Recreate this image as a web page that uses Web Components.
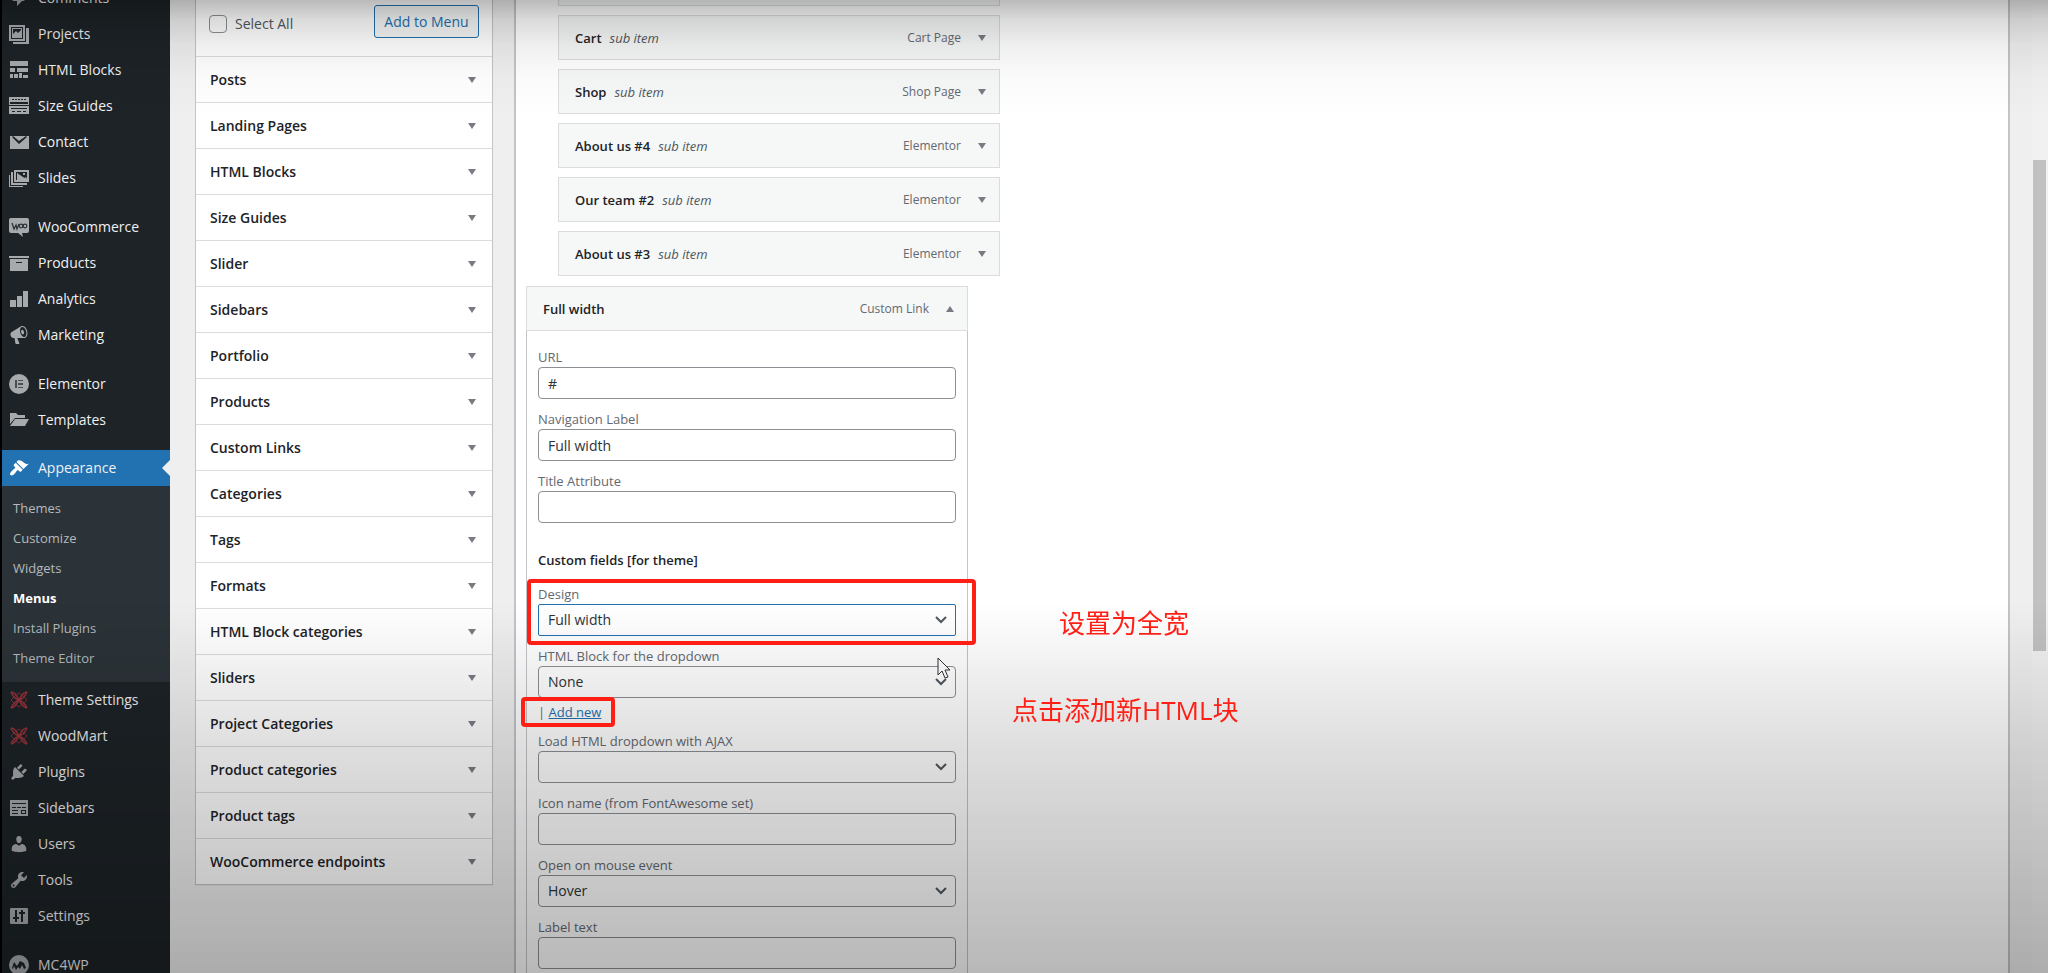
<!DOCTYPE html>
<html lang="en">
<head>
<meta charset="utf-8">
<title>Menus</title>
<style>
	body {
		margin: 0;
		height: 100vh;
		overflow: hidden;
		font-family: "Open Sans", "Noto Sans", "Noto Sans CJK SC", sans-serif;
		font-size: 14px;
		line-height: 20px;
		color: #1d2327;
		background: #efefef;
	}
</style>
</head>
<body>
<menus-screen></menus-screen>

<script>
const ICONS = {
	comments: '<path d="M5 2h9a2 2 0 0 1 2 2v7a2 2 0 0 1-2 2h-1l-5 5v-5H5a2 2 0 0 1-2-2V4a2 2 0 0 1 2-2z"/>',
	projects: '<path fill-rule="evenodd" d="M0 1h16v16H0zM2 3v12h12V3z"/><path fill-rule="evenodd" d="M3 4h10v10H3zM4 5v5l3-3 2 2 3-3V5z"/><path d="M17 4h3v16H4v-2h13z"/>',
	blocks: '<path d="M1 1h18v5H1zM1 8h5v4H1zM8 8h11v4H8zM1 14h3v4H1zM5 14h4v4H5zM10 13h3v5h-3zM14 15h5v3h-5z"/>',
	guides: '<path fill-rule="evenodd" d="M0 1h20v8H0zM1 6v2h18V6zM3 3v1h2V3zM6 3v1h2V3zM9 3v1h2V3zM12 3v1h2V3zM15 3v1h2V3z"/><path fill-rule="evenodd" d="M0 10h20v8H0zM2 12v1h16v-1zM3 15v1h3v-1zM8 15v1h4v-1zM14 15v1h3v-1z"/>',
	mail: '<path fill-rule="evenodd" d="M1 4h19v13H1zM3 5l7 7 8-7-1-1-7 5-6-5z"/>',
	slides: '<path fill-rule="evenodd" d="M5 2h15v12H5zM7 4v8h1l3-4 3 3 3-2 1 2V4zM14 5h2v2h-2z"/><path d="M2 4h2v11h14v2H2zM0 7h1v11h13v1H0z"/><path d="M8 5l9 6v1H8z"/>',
	woo: '<path d="M2 1h16a2 2 0 0 1 2 2v11a2 2 0 0 1-2 2h-5l1 4-5-4H2a2 2 0 0 1-2-2V3a2 2 0 0 1 2-2z"/><path d="M3 6l2 6 2-4 1 4 2-5" fill="none" stroke="#2c3338" stroke-width="1.3"/><circle cx="12" cy="9" r="1.8" fill="none" stroke="#2c3338" stroke-width="1.2"/><circle cx="16" cy="9" r="1.8" fill="none" stroke="#2c3338" stroke-width="1.2"/>',
	archive: '<path d="M20 3v2H0V3zM1 6h18v12H1zm12 4V9H7v1z"/>',
	chart: '<path d="M19 18V2h-5v16zm-6 0V7H8v11zm-6 0v-7H1v7z"/>',
	megaphone: '<path d="M18.15 5.94c.46 1.62.38 3.22-.02 4.48-.42 1.28-1.26 2.18-2.3 2.48-.16.06-.26.06-.4.06-.06.02-.12.02-.18.02-.06.02-.14.02-.22.02h-6.8l2.22 5.5c.02.14-.06.26-.14.34-.08.1-.24.16-.34.16H6.95c-.1 0-.26-.06-.34-.16-.08-.08-.16-.2-.14-.34l-1-5.5H4.25l-.02-.02c-.5.06-1.08-.18-1.54-.62s-.88-1.08-1.06-1.88c-.24-.8-.2-1.56-.02-2.2.18-.62.58-1.08 1.06-1.3l.02-.02 9-5.4c.1-.06.18-.1.24-.16.06-.04.14-.08.24-.12.16-.08.28-.12.5-.18 1.04-.3 2.24.1 3.22.98s1.84 2.24 2.26 3.86zm-2.58 5.98h-.02c.4-.1.74-.34 1.04-.7.58-.7.86-1.76.86-3.04 0-.64-.1-1.3-.28-1.98-.34-1.36-1.02-2.5-1.78-3.24s-1.68-1.1-2.46-.88c-.82.22-1.4.96-1.7 2-.32 1.04-.28 2.36.06 3.72.38 1.36 1 2.5 1.8 3.24.78.74 1.62 1.1 2.48.88zm-2.54-7.08c.22-.04.42-.02.62.04.38.16.76.48 1.02 1s.42 1.2.42 1.78c0 .3-.04.56-.12.8-.18.48-.44.84-.86.94-.34.1-.8-.06-1.14-.4s-.64-.86-.78-1.5c-.18-.62-.12-1.24.02-1.72s.48-.84.82-.94z"/>',
	elementor: '<circle cx="10" cy="10" r="10"/><path d="M6 6h2v8H6zM9 6h5v1H9zM9 9h5v2H9zM9 13h5v1H9z" fill="#4a4f54"/>',
	folder: '<path d="M1 3h6l2 2h7v3H6L1 14z"/><path d="M6 9h14l-4 7H1z"/>',
	brush: '<path d="M14.48 11.06L7.41 3.99l1.5-1.5c.5-.56 2.3-.47 3.51.32 1.21.8 1.43 1.28 2.91 2.1 1.18.64 2.45 1.26 4.45.85zm-.71.71L6.7 4.7 4.93 6.47c-.39.39-.39 1.02 0 1.41l1.06 1.06c.39.39.39 1.03 0 1.42-.6.6-1.43 1.11-2.21 1.69-.35.26-.7.53-1.01.84C1.43 14.23.4 16.08 1.4 17.07c.99 1 2.84-.03 4.18-1.36.31-.31.58-.66.85-1.02.57-.78 1.08-1.61 1.69-2.21.39-.39 1.02-.39 1.41 0l1.06 1.06c.39.39 1.02.39 1.41 0z"/>',
	woodmart: '<g fill="none" stroke="#94323a" stroke-width="1.5"><path d="M2 2c2 5 5 7 8 8s6 4 8 8M18 2c-2 5-5 7-8 8s-6 4-8 8M2 2c5 0 6 5 8 8s4 8 8 8M18 2c-5 0-6 5-8 8s-4 8-8 8"/><path d="M2 10l4-4 4-3 4 3 4 4-4 4-4 3-4-3z" stroke-width=".8"/></g>',
	plug: '<path d="M13.11 4.36L9.87 7.6 8 5.73l3.24-3.24c.35-.34 1.05-.2 1.56.32.52.51.66 1.21.31 1.55zm-8 1.77l.91-1.12 9.01 9.01-1.19.84c-.71.71-2.63 1.16-3.82 1.16H6.14L4.9 17.26c-.59.59-1.54.59-2.12 0-.59-.58-.59-1.53 0-2.12l1.24-1.24v-3.88c0-1.13.4-3.19 1.09-3.89zm7.26 3.97l3.24-3.24c.34-.35 1.04-.21 1.55.31.52.51.66 1.21.31 1.55l-3.24 3.25z"/>',
	sidebars: '<path fill-rule="evenodd" d="M1 2h18v16H1zM3 5v1h14V5zM3 9v1h4V9zM8 9v1h4V9zM13 9v1h4V9zM3 12v1h6v-1zM3 15v1h6v-1zM12 12v4h5v-4zM13 13h3v2h-3z"/>',
	users: '<path d="M10 9.25c-2.27 0-2.73-3.44-2.73-3.44C7 4.02 7.82 2 9.97 2c2.16 0 2.98 2.02 2.71 3.81 0 0-.41 3.44-2.68 3.44zm0 2.57L12.72 10c2.39 0 4.52 2.33 4.52 4.53v2.49s-3.65 1.13-7.24 1.13c-3.65 0-7.24-1.13-7.24-1.13v-2.49c0-2.25 1.94-4.48 4.47-4.48z"/>',
	wrench: '<path d="M16.68 9.77c-1.34 1.34-3.3 1.67-4.95.99l-5.41 6.52c-.99.99-2.59.99-3.58 0s-.99-2.59 0-3.57l6.52-5.42c-.68-1.65-.35-3.61.99-4.95 1.28-1.28 3.12-1.62 4.72-1.06l-2.89 2.89 2.82 2.82 2.86-2.87c.53 1.58.18 3.39-1.08 4.65zM3.81 16.21c.4.39 1.04.39 1.43 0 .4-.4.4-1.04 0-1.43-.39-.4-1.03-.4-1.43 0-.39.39-.39 1.03 0 1.43z"/>',
	settings: '<path fill-rule="evenodd" d="M2 2h16a1 1 0 0 1 1 1v14a1 1 0 0 1-1 1H2a1 1 0 0 1-1-1V3a1 1 0 0 1 1-1zM6 4v7H4v2h2v3h2v-3h2v-2H8V4zM12 4v2h-2v2h2v8h2V8h2V6h-2V4z"/>',
	mc4wp: '<circle cx="10" cy="10" r="10"/><path d="M3 13l2-6 3 4 3-5 4 2 2 5-2 1-2-4-2 4-2-2-2 3-2-4-1 3z" fill="#1d2327"/>',
};

class AdminIcon extends HTMLElement {
	connectedCallback() {
		const root = this.attachShadow({mode: 'open'});
		root.innerHTML = `
			<style>
				:host { display: block; width: 20px; height: 20px; }
				svg { display: block; fill: currentColor; }
			</style>
			<svg width="20" height="20" viewBox="0 0 20 20" aria-hidden="true">${ICONS[this.getAttribute('name')]}</svg>
		`;
	}
}
customElements.define('admin-icon', AdminIcon);

class AdminLink extends HTMLElement {
	connectedCallback() {
		const root = this.attachShadow({mode: 'open'});
		root.innerHTML = `
			<style>
				:host { display: block; }
				a {
					display: flex;
					align-items: center;
					gap: 9px;
					height: 36px;
					padding-left: 7px;
					color: #f0f0f1;
					font-weight: 500;
					text-decoration: none;
				}
				admin-icon { color: #a7aaad; }
				:host([current]) { position: relative; background: #2271b1; }
				:host([current]) admin-icon { color: #fff; }
				:host([current])::after {
					content: "";
					position: absolute;
					right: 0;
					top: 10px;
					border: 8px solid transparent;
					border-left: 0;
					border-right-color: #efefef;
				}
			</style>
			<a href="#"><admin-icon name="${this.getAttribute('icon')}"></admin-icon><slot></slot></a>
		`;
	}
}
customElements.define('admin-link', AdminLink);

class AdminMenu extends HTMLElement {
	connectedCallback() {
		const link = ([icon, text]) => `<admin-link icon="${icon}">${text}</admin-link>`;
		const group = (items) => `<div class="group">${items.map(link).join('')}</div>`;
		const root = this.attachShadow({mode: 'open'});
		root.innerHTML = `
			<style>
				:host {
					display: block;
					overflow: hidden;
					border-left: 2px solid #000;
					background: #1d2327;
				}
				/* the menu is scrolled a little way down */
				nav { margin-top: -20px; }
				.group + .group { margin-top: 13px; }
				.group + .current { margin-top: 12px; }
				.sub {
					padding: 7px 0 9px 11px;
					background: #2c3338;
					font-size: 13px;
				}
				.sub a {
					display: block;
					line-height: 30px;
					color: #b4b9be;
					text-decoration: none;
				}
				.sub a[aria-current] { color: #fff; font-weight: 700; }
			</style>
			<nav>
				${group([['comments', 'Comments'], ['projects', 'Projects'], ['blocks', 'HTML Blocks'], ['guides', 'Size Guides'], ['mail', 'Contact'], ['slides', 'Slides']])}
				${group([['woo', 'WooCommerce'], ['archive', 'Products'], ['chart', 'Analytics'], ['megaphone', 'Marketing']])}
				${group([['elementor', 'Elementor'], ['folder', 'Templates']])}
				<div class="group current">
					<admin-link icon="brush" current>Appearance</admin-link>
					<div class="sub">
						<a href="#">Themes</a>
						<a href="#">Customize</a>
						<a href="#">Widgets</a>
						<a href="#" aria-current="page">Menus</a>
						<a href="#">Install Plugins</a>
						<a href="#">Theme Editor</a>
					</div>
					${[['woodmart', 'Theme Settings'], ['woodmart', 'WoodMart'], ['plug', 'Plugins'], ['sidebars', 'Sidebars'], ['users', 'Users'], ['wrench', 'Tools'], ['settings', 'Settings']].map(link).join('')}
				</div>
				${group([['mc4wp', 'MC4WP']])}
			</nav>
		`;
	}
}
customElements.define('admin-menu', AdminMenu);

class ToggleArrow extends HTMLElement {
	connectedCallback() {
		const d = this.hasAttribute('up') ? 'M0 6h8L4 0z' : 'M0 0h8L4 6z';
		const root = this.attachShadow({mode: 'open'});
		root.innerHTML = `
			<style>
				:host { display: block; }
				svg { display: block; fill: #787c82; }
			</style>
			<svg width="8" height="6" viewBox="0 0 8 6" aria-hidden="true"><path d="${d}"/></svg>
		`;
	}
}
customElements.define('toggle-arrow', ToggleArrow);

class ItemSources extends HTMLElement {
	connectedCallback() {
		const sections = ['Posts', 'Landing Pages', 'HTML Blocks', 'Size Guides', 'Slider', 'Sidebars', 'Portfolio', 'Products', 'Custom Links', 'Categories', 'Tags', 'Formats', 'HTML Block categories', 'Sliders', 'Project Categories', 'Product categories', 'Product tags', 'WooCommerce endpoints'];
		const root = this.attachShadow({mode: 'open'});
		root.innerHTML = `
			<style>
				:host {
					display: block;
					border: 1px solid #c3c4c7;
					border-top: 0;
					background: #fff;
					box-shadow: 0 1px 1px #0000000a;
				}
				.actions {
					display: flex;
					align-items: flex-start;
					justify-content: space-between;
					height: 51px;
					padding: 5px 13px 0;
				}
				label {
					display: flex;
					align-items: center;
					gap: 8px;
					height: 38px;
					color: #50575e;
				}
				input {
					appearance: none;
					box-sizing: border-box;
					width: 18px;
					height: 18px;
					margin: 0;
					border: 1px solid #8c8f94;
					border-radius: 4px;
					background: #fff;
				}
				.add {
					width: 105px;
					height: 33px;
					padding: 0;
					border: 1px solid #2271b1;
					border-radius: 3px;
					background: #f6f7f7;
					color: #2271b1;
					font: inherit;
				}
				.section {
					display: flex;
					align-items: center;
					justify-content: space-between;
					box-sizing: border-box;
					width: 100%;
					height: 46px;
					padding: 0 16px 0 14px;
					border: 0;
					border-top: 1px solid #dcdcde;
					background: none;
					color: #1d2327;
					font: inherit;
					font-weight: 600;
				}
			</style>
			<div class="actions">
				<label><input type="checkbox">Select All</label>
				<button class="add">Add to Menu</button>
			</div>
			${sections.map(s => `<button class="section">${s}<toggle-arrow></toggle-arrow></button>`).join('')}
		`;
	}
}
customElements.define('item-sources', ItemSources);

class MenuItem extends HTMLElement {
	connectedCallback() {
		const open = this.hasAttribute('open');
		const name = this.getAttribute('name');
		const root = this.attachShadow({mode: 'open'});
		root.innerHTML = `
			<style>
				:host { display: block; width: 442px; font-size: 13px; }
				:host([sub]) { margin-left: 32px; }
				:host([open]) { margin-top: 1px; }
				.bar {
					display: flex;
					align-items: center;
					box-sizing: border-box;
					height: 45px;
					padding: 0 13px 0 16px;
					border: 1px solid #dcdcde;
					background: #f6f7f7;
				}
				b { font-weight: 600; }
				i { margin-left: 8px; color: #50575e; }
				.type { margin: 0 17px 0 auto; color: #646970; font-size: 12px; }
				.settings {
					padding: 16px 11px 10px;
					border: 1px solid #c3c4c7;
					border-top: 0;
				}
			</style>
			<div class="bar">${name ? `
				<b>${name}</b>${this.hasAttribute('sub') ? '<i>sub item</i>' : ''}
				<span class="type">${this.getAttribute('type')}</span>
				<toggle-arrow ${open ? 'up' : ''}></toggle-arrow>` : ''}
			</div>
			${open ? '<div class="settings"><slot></slot></div>' : ''}
		`;
	}
}
customElements.define('menu-item', MenuItem);

class SettingField extends HTMLElement {
	connectedCallback() {
		const value = this.getAttribute('value') || '';
		const control = this.hasAttribute('select')
			? `<select id="control"><option>${value}</option></select>
				<svg width="14" height="8" viewBox="0 0 14 8" aria-hidden="true"><path d="M2 1l5 5 5-5"/></svg>`
			: `<input id="control" type="text" value="${value}">`;
		const root = this.attachShadow({mode: 'open'});
		root.innerHTML = `
			<style>
				:host { display: block; margin-bottom: 10px; }
				label { display: block; color: #646970; }
				.control { display: grid; align-items: center; }
				input, select {
					grid-area: 1 / 1;
					appearance: none;
					box-sizing: border-box;
					width: 100%;
					height: 32px;
					margin: 0;
					padding: 0 9px;
					border: 1px solid #8c8f94;
					border-radius: 4px;
					background: #fff;
					color: #2c3338;
					font: inherit;
					font-size: 14px;
				}
				:host([focused]) select { border-color: #2271b1; border-radius: 2px; }
				svg {
					grid-area: 1 / 1;
					justify-self: end;
					margin-right: 8px;
					fill: none;
					stroke: #50575e;
					stroke-width: 2;
					pointer-events: none;
				}
			</style>
			<label for="control">${this.getAttribute('label')}</label>
			<div class="control">${control}</div>
		`;
	}
}
customElements.define('setting-field', SettingField);

// Red frame round its content, with a note to the right of it
class RedMark extends HTMLElement {
	connectedCallback() {
		const root = this.attachShadow({mode: 'open'});
		root.innerHTML = `
			<style>
				:host { display: block; position: relative; }
				.frame {
					position: absolute;
					inset: var(--frame-inset);
					z-index: 2;
					border: 4px solid #ff1f14;
					border-radius: 4px;
					pointer-events: none;
				}
				.note {
					position: absolute;
					left: var(--note-left);
					top: var(--note-top);
					z-index: 2;
					color: #ff1f14;
					font-size: 26px;
					line-height: 36px;
					white-space: nowrap;
				}
			</style>
			<slot></slot>
			<div class="frame"></div>
			<div class="note">${this.getAttribute('note')}</div>
		`;
	}
}
customElements.define('red-mark', RedMark);

class MousePointer extends HTMLElement {
	connectedCallback() {
		const root = this.attachShadow({mode: 'open'});
		root.innerHTML = `
			<style>
				:host { display: block; position: absolute; left: 399px; top: 11px; }
				svg { display: block; fill: #fff; stroke: #2c3338; }
			</style>
			<svg width="16" height="24" viewBox="0 0 16 24" aria-hidden="true"><path d="M1 1v17l4-4 3 7 3-1-3-7h5z"/></svg>
		`;
	}
}
customElements.define('mouse-pointer', MousePointer);

class PageScrollbar extends HTMLElement {
	connectedCallback() {
		const root = this.attachShadow({mode: 'open'});
		root.innerHTML = `
			<style>
				:host { display: flex; flex-direction: column; padding: 0 2px 0 1px; background: #f1f1f1; }
				.before { flex: 160; }
				.thumb { flex: 491; background: #c1c1c1; }
				.after { flex: 322; }
			</style>
			<div class="before"></div><div class="thumb"></div><div class="after"></div>
		`;
	}
}
customElements.define('page-scrollbar', PageScrollbar);

class MenusScreen extends HTMLElement {
	connectedCallback() {
		const root = this.attachShadow({mode: 'open'});
		root.innerHTML = `
			<style>
				:host {
					display: grid;
					grid-template-columns: 170px 298px 1fr 16px;
					grid-template-rows: minmax(0, 1fr);
					height: 100vh;
					overflow: hidden;
				}
				item-sources { align-self: start; margin: 0 -25px 0 25px; }
				.structure {
					margin: 0 22px 0 46px;
					padding-left: 10px;
					border: 2px solid #c3c4c7;
					border-width: 0 2px;
					background: #fff;
				}
				.items {
					display: grid;
					gap: 9px;
					/* first visible row is cut off by the top edge */
					margin-top: -39px;
				}
				h4 { margin: 27px 0 14px; font-size: 13px; font-weight: 600; }
				.design { margin-bottom: 10px; --frame-inset: -5px -20px -9px -11px; --note-left: 521px; --note-top: 21px; }
				.design setting-field { margin: 0; }
				.block { position: relative; }
				.add-new {
					width: 66px;
					margin: -6px 0 9px;
					white-space: nowrap;
					color: #646970;
					--frame-inset: -5px -11px -5px -17px;
					--note-left: 474px;
					--note-top: -10px;
				}
				a { color: #2271b1; }
				.shade {
					position: fixed;
					inset: 0;
					z-index: 1;
					pointer-events: none;
					background:
						linear-gradient(#00000045, #00000024 20px, #00000010 45px, #00000005 75px, transparent 115px),
						linear-gradient(transparent 62%, #00000021 77%, #00000030 86%, #00000047);
				}
			</style>
			<admin-menu></admin-menu>
			<item-sources></item-sources>
			<main class="structure">
				<div class="items">
					<menu-item sub></menu-item>
					<menu-item sub name="Cart" type="Cart Page"></menu-item>
					<menu-item sub name="Shop" type="Shop Page"></menu-item>
					<menu-item sub name="About us #4" type="Elementor"></menu-item>
					<menu-item sub name="Our team #2" type="Elementor"></menu-item>
					<menu-item sub name="About us #3" type="Elementor"></menu-item>
					<menu-item open name="Full width" type="Custom Link">
						<setting-field label="URL" value="#"></setting-field>
						<setting-field label="Navigation Label" value="Full width"></setting-field>
						<setting-field label="Title Attribute"></setting-field>
						<h4>Custom fields [for theme]</h4>
						<red-mark class="design" note="设置为全宽">
							<setting-field select focused label="Design" value="Full width"></setting-field>
						</red-mark>
						<div class="block">
							<setting-field select label="HTML Block for the dropdown" value="None"></setting-field>
							<mouse-pointer></mouse-pointer>
						</div>
						<red-mark class="add-new" note="点击添加新HTML块">| <a href="#">Add new</a></red-mark>
						<setting-field select label="Load HTML dropdown with AJAX"></setting-field>
						<setting-field label="Icon name (from FontAwesome set)"></setting-field>
						<setting-field select label="Open on mouse event" value="Hover"></setting-field>
						<setting-field label="Label text"></setting-field>
					</menu-item>
				</div>
			</main>
			<page-scrollbar></page-scrollbar>
			<div class="shade"></div>
		`;
	}
}
customElements.define('menus-screen', MenusScreen);
</script>
</body>
</html>
